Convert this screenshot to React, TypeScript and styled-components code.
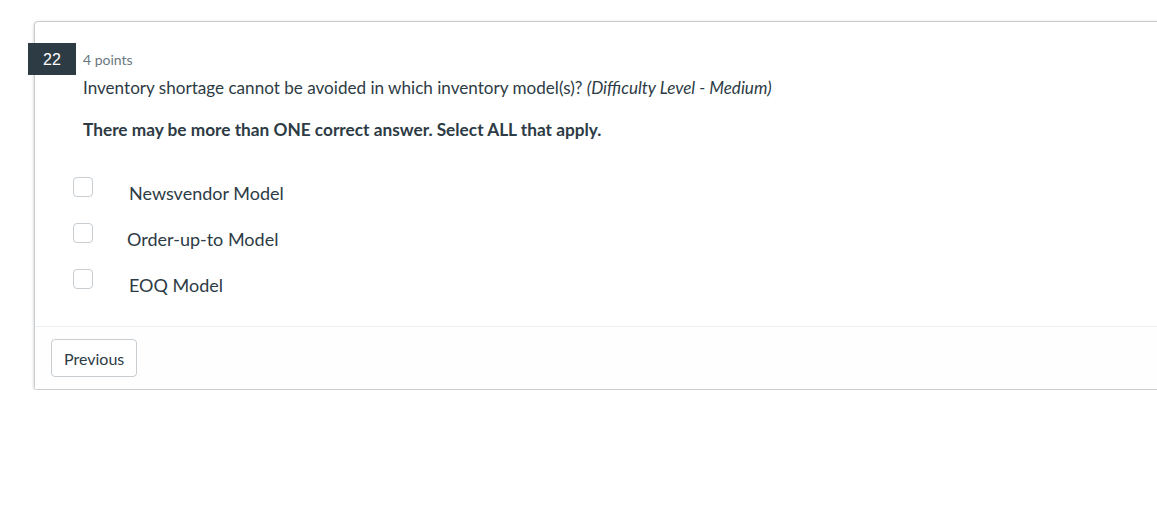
import React from "react";
import styled, { createGlobalStyle } from "styled-components";

const Global = createGlobalStyle`
  html, body { margin: 0; padding: 0; background: #fff; overflow: hidden; }
  body { font-family: Lato, "Open Sans", sans-serif; color: #2d3b45; }
`;

const Page = styled.div`
  padding: 21px 0 0 34px;
  width: 1200px;
`;

const Card = styled.div`
  position: relative;
  width: 1160px;
  border: 1px solid #c7cdd1;
  border-radius: 4px;
  box-shadow: 0 1px 3px rgba(0, 0, 0, 0.25);
  background: #fff;
`;

const Badge = styled.div`
  position: absolute;
  left: -7px;
  top: 21px;
  width: 48px;
  height: 32px;
  background: #2d3b45;
  color: #fff;
  font-family: "Liberation Sans", Arial, sans-serif;
  font-size: 16px;
  display: flex;
  align-items: center;
  justify-content: center;
  padding-top: 1px;
  box-sizing: border-box;
`;

const Body = styled.div`
  padding: 30px 0 37px 48px;
`;

const Points = styled.div`
  font-size: 14px;
  line-height: 16px;
  color: #6b7780;
`;

const Question = styled.p`
  margin: 8px 0 0;
  font-size: 17.1px;
  line-height: 24px;
`;

const Instruction = styled.p`
  margin: 18px 0 0;
  font-size: 17.25px;
  line-height: 24px;
  font-weight: 700;
`;

const Options = styled.div`
  margin: 35px 0 0 -10px;
  display: flex;
  flex-direction: column;
  gap: 26px;
`;

const Option = styled.label`
  display: flex;
  align-items: flex-start;
  height: 20px;
`;

const Box = styled.span`
  width: 18px;
  height: 18px;
  border: 1px solid #c7cdd1;
  border-radius: 4px;
  background: #fff;
  flex: none;
`;

const Label = styled.span<{ $indent: number }>`
  margin-left: ${(p) => p.$indent}px;
  margin-top: 4px;
  font-size: 18px;
  line-height: 24px;
`;

const Footer = styled.div`
  border-top: 1px solid #eef0f1;
  background: #fefefe;
  padding: 12px 16px 12px;
`;

const Button = styled.button`
  height: 38px;
  padding: 0 12px;
  border: 1px solid #c7cdd1;
  border-radius: 4px;
  background: #fff;
  color: #2d3b45;
  font-family: Lato, sans-serif;
  font-size: 16px;
`;

const options = [
  { text: "Newsvendor Model", indent: 36 },
  { text: "Order-up-to Model", indent: 34 },
  { text: "EOQ Model", indent: 36 },
];

export default function App() {
  return (
    <Page>
      <Global />
      <Card>
        <Badge>22</Badge>
        <Body>
          <Points>4 points</Points>
          <Question>
            Inventory shortage cannot be avoided in which inventory model(s)?{" "}
            <em>(Difficulty Level - Medium)</em>
          </Question>
          <Instruction>There may be more than ONE correct answer. Select ALL that apply.</Instruction>
          <Options>
            {options.map((o) => (
              <Option key={o.text}>
                <Box />
                <Label $indent={o.indent}>{o.text}</Label>
              </Option>
            ))}
          </Options>
        </Body>
        <Footer>
          <Button>Previous</Button>
        </Footer>
      </Card>
    </Page>
  );
}
